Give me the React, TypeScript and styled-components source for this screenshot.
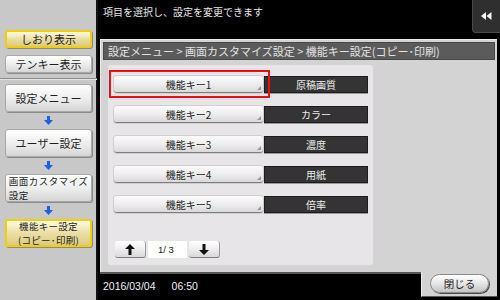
import React from "react";
import styled, { createGlobalStyle } from "styled-components";

const GlobalStyle = createGlobalStyle`
  html, body {
    margin: 0;
    padding: 0;
    background: #000;
  }
  body {
    font-family: "Noto Sans CJK JP", "Noto Sans", sans-serif;
  }
`;

const Screen = styled.div`
  width: 500px;
  height: 300px;
  display: flex;
  background: #000;
  overflow: hidden;
`;

const Sidebar = styled.div`
  width: 98px;
  background: #c8c8c8;
  border-right: 2px solid #111;
  display: flex;
  flex-direction: column;
  align-items: center;
  padding-top: 30px;
  box-sizing: border-box;
`;

const SideButton = styled.div<{ active?: boolean; tall?: boolean }>`
  width: 87px;
  height: ${(p) => (p.tall ? "28px" : "18px")};
  box-sizing: border-box;
  border-radius: 3px;
  border: ${(p) => (p.active ? "2px solid #f2cf00" : "1px solid #a8a8a8")};
  background: ${(p) =>
    p.active
      ? "linear-gradient(#fffbe0, #e9dca0 55%, #dccb82)"
      : "linear-gradient(#ffffff, #ececec 55%, #d6d6d6)"};
  box-shadow: 1px 1px 0 #8a8a8a;
  display: flex;
  align-items: center;
  justify-content: center;
  text-align: center;
  font-size: 11px;
  line-height: 12px;
  color: #1e1e1e;
  margin-left: 1px;
  white-space: nowrap;
`;

const TwoLine = styled.span<{ left?: boolean }>`
  display: flex;
  flex-direction: column;
  align-items: ${(p) => (p.left ? "flex-start" : "center")};
  font-size: 9.5px;
  line-height: 14px;
  letter-spacing: ${(p) => (p.left ? "0.5px" : "0.3px")};
`;

const Separator = styled.div`
  width: 98px;
  height: 2px;
  margin: 5px 0 4px;
  border-top: 1px solid #8c8c8c;
  border-bottom: 1px solid #e4e4e4;
  box-sizing: border-box;
`;

const FlowArrow = styled.div`
  height: 17px;
  display: flex;
  align-items: center;
  justify-content: center;
`;

const Main = styled.div`
  flex: 1;
  display: flex;
  flex-direction: column;
  background: #000;
`;

const TopBar = styled.div`
  height: 39px;
  display: flex;
  justify-content: space-between;
  align-items: flex-start;
`;

const Message = styled.div`
  color: #e6e6e6;
  font-size: 10px;
  padding: 4px 0 0 5px;
`;

const BackButton = styled.div`
  width: 27px;
  height: 32px;
  background: #2f2f2f;
  border-left: 1px solid #4a4a4a;
  border-bottom: 1px solid #4a4a4a;
  border-radius: 0 0 0 4px;
  display: flex;
  align-items: center;
  justify-content: center;
`;

const Panel = styled.div`
  flex: 1;
  margin: 0 3px 0 2px;
  background: #d3d3d3;
  border-top: 1px solid #ededed;
  border-left: 1px solid #ededed;
  padding: 2px 2px 0;
  display: flex;
  flex-direction: column;
`;

const Breadcrumb = styled.div`
  height: 18px;
  box-sizing: border-box;
  background: #5b5b5b;
  border: 1px solid #474747;
  color: #e2e2e2;
  font-size: 11px;
  line-height: 16px;
  padding-left: 4px;
  white-space: nowrap;
  overflow: hidden;
`;

const ListPanel = styled.div`
  width: 265px;
  height: 200px;
  margin: 5px 0 0 5px;
  background: #e7e5e8;
  border-radius: 3px;
  padding: 11px 0 0 6px;
  box-sizing: border-box;
  display: flex;
  flex-direction: column;
  gap: 13px;
`;

const Row = styled.div`
  position: relative;
  display: flex;
  height: 17px;
`;

const Highlight = styled.div`
  position: absolute;
  left: -5px;
  top: -6px;
  width: 161px;
  height: 28px;
  border: 2px solid #ee1010;
  box-sizing: border-box;
`;

const KeyButton = styled.div`
  position: relative;
  width: 149px;
  height: 17px;
  box-sizing: border-box;
  border-radius: 3px;
  background: linear-gradient(#fbfbfb, #eeeeee 50%, #d9d9d9);
  border-bottom: 1px solid #7d7d7d;
  box-shadow: 0 0 0 1px #cfcfcf;
  display: flex;
  align-items: center;
  justify-content: center;
  font-size: 10px;
  color: #1c1c1c;
  &::after {
    content: "";
    position: absolute;
    right: 2px;
    bottom: 2px;
    border-left: 4px solid transparent;
    border-bottom: 4px solid #9a9a9a;
  }
`;

const ValueBox = styled.div`
  width: 104px;
  height: 17px;
  margin-left: 1px;
  box-sizing: border-box;
  background: #343434;
  border: 1px solid #1c1c1c;
  box-shadow: 0 1px 0 #9a9a9a;
  color: #ececec;
  font-size: 10px;
  display: flex;
  align-items: center;
  justify-content: center;
`;

const Pager = styled.div`
  display: flex;
  align-items: center;
  gap: 2px;
  margin-top: 15px;
  padding-left: 1px;
  height: 17px;
`;

const PageArrow = styled.div`
  width: 31px;
  height: 17px;
  box-sizing: border-box;
  border-radius: 3px;
  background: linear-gradient(#ffffff, #eeeeee 50%, #d8d8d8);
  border-bottom: 1px solid #7d7d7d;
  border-right: 1px solid #9a9a9a;
  display: flex;
  align-items: center;
  justify-content: center;
`;

const PageCount = styled.div`
  width: 39px;
  height: 17px;
  background: #fff;
  font-family: "Liberation Sans", sans-serif;
  font-size: 9.5px;
  color: #222;
  display: flex;
  align-items: center;
  padding-left: 10px;
  box-sizing: border-box;
`;

const BottomRow = styled.div`
  height: 28px;
  display: flex;
`;

const Status = styled.div`
  flex: 1;
  margin-left: 2px;
  border-top: 2px solid #555;
  color: #f0f0f0;
  font-family: "Liberation Sans", sans-serif;
  font-size: 10.5px;
  display: flex;
  align-items: center;
  gap: 16px;
  padding: 0 0 2px 3px;
`;

const CloseTab = styled.div`
  width: 76px;
  height: 25px;
  margin-right: 3px;
  background: #d3d3d3;
  border-bottom: 1px solid #555;
  border-left: 1px solid #ededed;
  box-sizing: border-box;
  display: flex;
  align-items: flex-start;
  justify-content: center;
  padding-top: 2px;
`;

const CloseButton = styled.div`
  width: 59px;
  height: 19px;
  box-sizing: border-box;
  border-radius: 10px;
  border: 1px solid #8a8a8a;
  background: linear-gradient(#ffffff, #e6e6e6 50%, #c4c4c4);
  box-shadow: 1px 1px 0 #4a4a4a;
  display: flex;
  align-items: center;
  justify-content: center;
  font-size: 10.5px;
  color: #222;
`;

const BlueArrow = () => (
  <svg width="9" height="9" viewBox="0 0 9 9">
    <path d="M3 0h3v4h3L4.5 9 0 4h3z" fill="#1f5fe6" />
  </svg>
);

const UpArrow = () => (
  <svg width="10" height="11" viewBox="0 0 10 11">
    <path d="M5 0L10 5H6.5V11H3.5V5H0z" fill="#111" />
  </svg>
);

const DownArrow = () => (
  <svg width="10" height="11" viewBox="0 0 10 11">
    <path d="M5 11L10 6H6.5V0H3.5V6H0z" fill="#111" />
  </svg>
);

const BackIcon = () => (
  <svg width="11" height="8" viewBox="0 0 11 8">
    <path d="M0 4L5 0v8zM5.5 4l5-4v8z" fill="#f4f4f4" />
  </svg>
);

const keys = [
  { label: "機能キー1", value: "原稿画質" },
  { label: "機能キー2", value: "カラー" },
  { label: "機能キー3", value: "濃度" },
  { label: "機能キー4", value: "用紙" },
  { label: "機能キー5", value: "倍率" },
];

export default function App() {
  return (
    <>
      <GlobalStyle />
      <Screen>
        <Sidebar>
          <SideButton active>しおり表示</SideButton>
          <SideButton style={{ marginTop: 7 }}>テンキー表示</SideButton>
          <Separator />
          <SideButton tall>設定メニュー</SideButton>
          <FlowArrow>
            <BlueArrow />
          </FlowArrow>
          <SideButton tall>ユーザー設定</SideButton>
          <FlowArrow>
            <BlueArrow />
          </FlowArrow>
          <SideButton tall>
            <TwoLine left>
              <span>画面カスタマイズ</span>
              <span>設定</span>
            </TwoLine>
          </SideButton>
          <FlowArrow>
            <BlueArrow />
          </FlowArrow>
          <SideButton tall active>
            <TwoLine>
              <span>機能キー設定</span>
              <span>(コピー･印刷)</span>
            </TwoLine>
          </SideButton>
        </Sidebar>
        <Main>
          <TopBar>
            <Message>項目を選択し、設定を変更できます</Message>
            <BackButton>
              <BackIcon />
            </BackButton>
          </TopBar>
          <Panel>
            <Breadcrumb>
              設定メニュー &gt; 画面カスタマイズ設定 &gt; 機能キー設定(コピー･印刷)
            </Breadcrumb>
            <ListPanel>
              {keys.map((k, i) => (
                <Row key={k.label}>
                  {i === 0 && <Highlight />}
                  <KeyButton>{k.label}</KeyButton>
                  <ValueBox>{k.value}</ValueBox>
                </Row>
              ))}
              <Pager>
                <PageArrow>
                  <UpArrow />
                </PageArrow>
                <PageCount>1/ 3</PageCount>
                <PageArrow>
                  <DownArrow />
                </PageArrow>
              </Pager>
            </ListPanel>
          </Panel>
          <BottomRow>
            <Status>
              <span>2016/03/04</span>
              <span>06:50</span>
            </Status>
            <CloseTab>
              <CloseButton>閉じる</CloseButton>
            </CloseTab>
          </BottomRow>
        </Main>
      </Screen>
    </>
  );
}
